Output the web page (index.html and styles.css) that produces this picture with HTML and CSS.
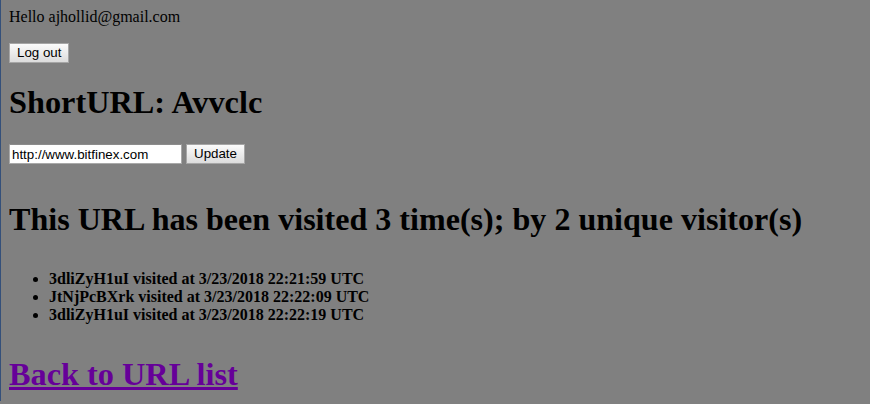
FILE: index.html
```html
<!DOCTYPE html>
<html>
<head>
<meta charset="utf-8">
<title>ShortURL</title>
<link rel="stylesheet" href="styles.css">
</head>
<body>
<div class="hello">Hello ajhollid@gmail.com</div>
<form class="logout-form">
  <button type="button" class="btn">Log out</button>
</form>
<h1 class="title">ShortURL: Avvclc</h1>
<form class="update-form">
  <input class="url-input" type="text" value="http://www.bitfinex.com">
  <button type="button" class="btn">Update</button>
</form>
<h1 class="visits">This URL has been visited 3 time(s); by 2 unique visitor(s)</h1>
<ul class="visit-list">
  <li>3dliZyH1uI visited at 3/23/2018 22:21:59 UTC</li>
  <li>JtNjPcBXrk visited at 3/23/2018 22:22:09 UTC</li>
  <li>3dliZyH1uI visited at 3/23/2018 22:22:19 UTC</li>
</ul>
<h1 class="back"><a class="back-link" href="#">Back to URL list</a></h1>
</body>
</html>
```
FILE: styles.css
```css
html {
  background: #808080;
  border-left: 1px solid #34507a;
}
body {
  margin: 8px;
  font-family: "Liberation Serif", "Times New Roman", serif;
  font-size: 16px;
  color: #000;
}
.hello {
  line-height: 18px;
}
.logout-form {
  margin: 17px 0 0 0;
  display: flex;
}
.btn {
  font-family: "Liberation Sans", Arial, sans-serif;
  font-size: 13.333px;
  color: #000;
  background: linear-gradient(#fbfbfb, #dcdcdc);
  border: 1px solid #a6a6a6;
  border-radius: 0;
  padding: 1px 7px;
  height: 20px;
  line-height: 16px;
}
.title {
  font-size: 32.3px;
  line-height: 37px;
  margin: 21px 0 23px 0;
}
.update-form {
  display: flex;
  gap: 4px;
  margin: 0 0 37px 0;
}
.url-input {
  font-family: "Liberation Sans", Arial, sans-serif;
  font-size: 13.333px;
  width: 173px;
  height: 20px;
  box-sizing: border-box;
  border: 1px solid #a9a9a9;
  border-top-color: #8c8c8c;
  background: #fff;
  padding: 1px 2px;
  margin: 0;
}
.visits {
  font-size: 32.08px;
  line-height: 37px;
  margin: 0;
}
.visit-list {
  margin: 32px 0 0 0;
  padding-left: 40px;
  font-weight: bold;
  line-height: 18px;
}
.back {
  font-size: 32.3px;
  line-height: 37px;
  margin: 32px 0 0 0;
}
.back-link {
  color: #660099;
}
```
